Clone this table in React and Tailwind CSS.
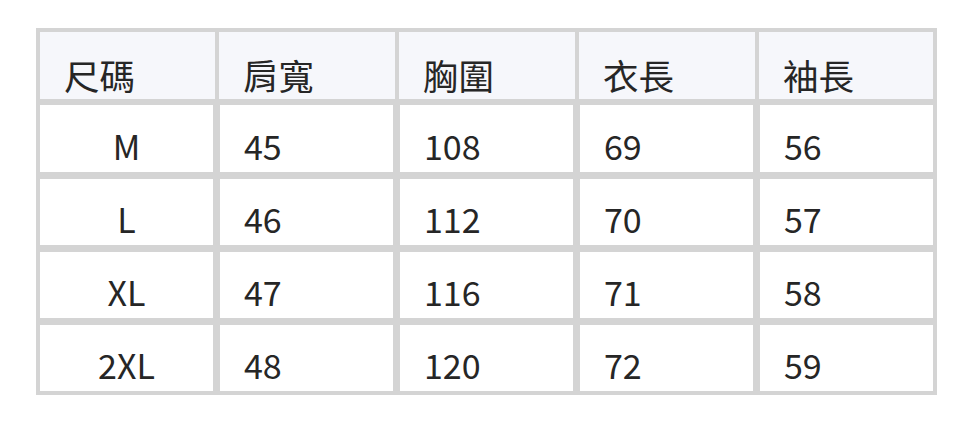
import React from "react";

const headers = ["尺碼", "肩寬", "胸圍", "衣長", "袖長"];
const rows = [
  { h: "h-[67px]", cells: ["M", "45", "108", "69", "56"] },
  { h: "h-[66px]", cells: ["L", "46", "112", "70", "57"] },
  { h: "h-[66px]", cells: ["XL", "47", "116", "71", "58"] },
  { h: "h-[66px]", cells: ["2XL", "48", "120", "72", "59"] },
];

export default function App() {
  return (
    <div
      className="w-[972px] h-[422px] bg-white pt-[28px] pl-[36px] text-[#262626] font-normal"
      style={{ fontFamily: '"Noto Sans CJK TC", "Noto Sans", sans-serif' }}
    >
      <div className="w-[901px] bg-[#d4d4d4] p-[4px] flex flex-col gap-[7px]">
        <div className="grid grid-cols-[175px_176px_176px_176px_174px] gap-x-[4px] h-[67px] mb-[-1px]">
          {headers.map((t) => (
            <div
              key={t}
              className="bg-[#f6f7fb] flex items-end pl-[24px] pb-[7px] text-[35.5px] leading-none"
            >
              {t}
            </div>
          ))}
        </div>
        {rows.map((r) => (
          <div
            key={r.cells[0]}
            className={`grid grid-cols-[173px_173px_173px_173px_173px] gap-x-[7px] ${r.h}`}
          >
            {r.cells.map((c, i) => (
              <div
                key={i}
                className={`bg-white flex items-end pb-[9px] text-[34px] leading-none ${
                  i === 0 ? "justify-center" : "pl-[24px]"
                }`}
              >
                {c}
              </div>
            ))}
          </div>
        ))}
      </div>
    </div>
  );
}
